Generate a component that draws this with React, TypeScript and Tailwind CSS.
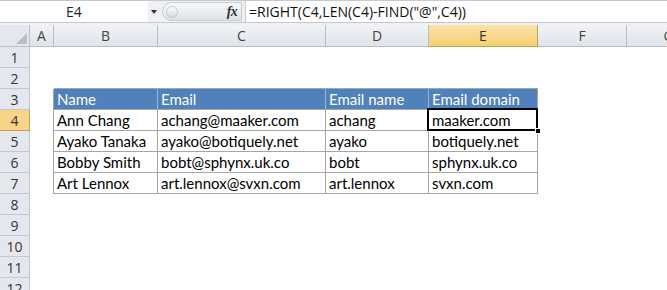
const letters = ['A', 'B', 'C', 'D', 'E', 'F', 'G']

const table: Record<number, string[]> = {
  3: ['Name', 'Email', 'Email name', 'Email domain'],
  4: ['Ann Chang', 'achang@maaker.com', 'achang', 'maaker.com'],
  5: ['Ayako Tanaka', 'ayako@botiquely.net', 'ayako', 'botiquely.net'],
  6: ['Bobby Smith', 'bobt@sphynx.uk.co', 'bobt', 'sphynx.uk.co'],
  7: ['Art Lennox', 'art.lennox@svxn.com', 'art.lennox', 'svxn.com'],
}

const FormulaBar = () => {
  return (
    <div className="flex h-[23px] border-t border-b border-[#c6cad0] bg-[#eef0f3]">
      <div className="w-[148px] bg-white flex items-center justify-center text-[14px] text-[#222]">E4</div>
      <div className="w-[12px] flex items-center justify-center">
        <div className="w-0 h-0 border-l-[3px] border-r-[3px] border-t-[4px] border-l-transparent border-r-transparent border-t-[#333]" />
      </div>
      <div className="w-[80px] ml-[2px] flex items-center">
        <div className="h-[19px] w-full rounded-l-full bg-gradient-to-b from-[#f7f8fa] to-[#dde1e6] border border-[#c9ced5] flex items-center justify-between pr-[4px] pl-[3px]">
          <div className="w-[12px] h-[12px] rounded-full bg-gradient-to-b from-white to-[#d5dae0] border border-[#c3c8cf]" />
          <span className="text-[14px] italic font-bold text-[#333] font-['Liberation_Serif',serif] tracking-tighter">fx</span>
        </div>
      </div>
      <div className="flex-1 bg-white border-l border-[#c6cad0] ml-[3px] flex items-center pl-[3px] text-[14px] text-[#111]">
        =RIGHT(C4,LEN(C4)-FIND("@",C4))
      </div>
    </div>
  )
}

const Row = ({ r }: { r: number }) => {
  const data = table[r]
  return (
    <>
      <div
        className={
          r === 4
            ? 'h-[21px] flex items-center justify-center border-r border-b border-[#c2a14d] bg-[#f7d486] text-[14px] text-[#333]'
            : 'h-[21px] flex items-center justify-center border-r border-b border-[#c3c9d2] bg-[#e4e8ee] text-[14px] text-[#333]'
        }
      >
        {r}
      </div>
      {letters.map((l, ci) => {
        const inTable = data && ci >= 1 && ci <= 4
        let cls = 'h-[21px] whitespace-nowrap'
        if (l === 'A' && data) cls += ' border-r border-[#a6a6a6]'
        if (r === 2 && ci >= 1 && ci <= 4) cls += ' border-b border-[#a6a6a6]'
        if (inTable && r === 3) cls += ' bg-[#4f81bd] text-white border-r border-r-[#9cb4d6] border-b border-b-[#a6a6a6]'
        if (inTable && r > 3) cls += ' border-r border-b border-[#a6a6a6] text-black'
        if (inTable && l === 'E') cls += ' border-r-[#a6a6a6]'
        const selected = r === 4 && l === 'E'
        return (
          <div key={l} className={cls + (selected ? ' relative' : '')}>
            {inTable && (
              <div className="pl-[3px] pt-[1px] font-['Lato',sans-serif] text-[15px] leading-[19px]">{data[ci - 1]}</div>
            )}
            {selected && (
              <>
                <div className="absolute -left-[2px] -top-[2px] -right-[1px] -bottom-[1px] border-2 border-black" />
                <div className="absolute -right-[4px] -bottom-[4px] w-[6px] h-[6px] bg-black border border-white" />
              </>
            )}
          </div>
        )
      })}
    </>
  )
}

const App = () => {
  const rows = Array.from({ length: 12 }, (_, i) => i + 1)
  return (
    <div className="w-[667px] h-[290px] overflow-hidden bg-white font-['Open_Sans',sans-serif]">
      <FormulaBar />
      <div className="h-[2px] bg-[#eef0f3]" />
      <div className="grid w-[720px] grid-cols-[30px_24px_104px_168px_103px_109px_89px_84px]">
        {/* column header row */}
        <div className="h-[22px] bg-[#e4e8ee] border-r border-b border-[#b7bec8] relative">
          <svg className="absolute right-[2px] bottom-[2px]" width="11" height="11">
            <polygon points="11,0 11,11 0,11" fill="#b8bec6" />
          </svg>
        </div>
        {letters.map((l) => (
          <div
            key={l}
            className={
              l === 'E'
                ? 'h-[22px] flex items-center justify-center border-r border-b border-[#c2a14d] bg-gradient-to-b from-[#fbe2a6] to-[#f5cf72] text-[14px] text-[#333]'
                : 'h-[22px] flex items-center justify-center border-r border-b border-[#b7bec8] bg-gradient-to-b from-[#f1f3f6] to-[#dfe4ea] text-[14px] text-[#444]'
            }
          >
            {l}
          </div>
        ))}
        {rows.map((r) => (
          <Row key={r} r={r} />
        ))}
      </div>
    </div>
  )
}

export default App
